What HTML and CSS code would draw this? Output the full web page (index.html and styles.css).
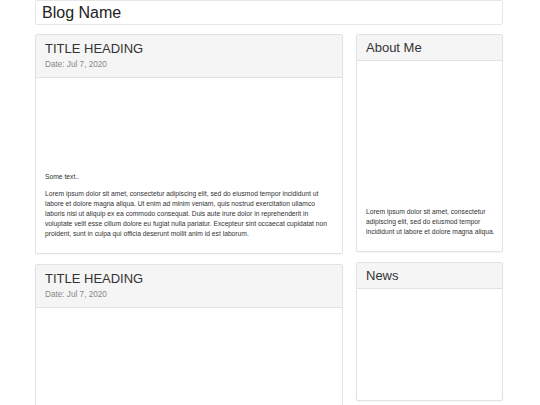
FILE: index.html
```html
<!DOCTYPE html>
<html>
<head>
<meta charset="utf-8">
<link rel="stylesheet" href="styles.css">
</head>
<body>
<div class="page">
  <div class="topbar">Blog Name</div>
  <div class="row">
    <div class="main">
      <div class="card">
        <div class="card-head">
          <div class="title">TITLE HEADING</div>
          <div class="date">Date: Jul 7, 2020</div>
        </div>
        <div class="card-body">
          <div class="spacer-main"></div>
          <p class="lead">Some text..</p>
          <p class="text">Lorem ipsum dolor sit amet, consectetur adipiscing elit, sed do eiusmod tempor incididunt ut labore et dolore magna aliqua. Ut enim ad minim veniam, quis nostrud exercitation ullamco laboris nisi ut aliquip ex ea commodo consequat. Duis aute irure dolor in reprehenderit in voluptate velit esse cillum dolore eu fugiat nulla pariatur. Excepteur sint occaecat cupidatat non proident, sunt in culpa qui officia deserunt mollit anim id est laborum.</p>
        </div>
      </div>
      <div class="card">
        <div class="card-head">
          <div class="title">TITLE HEADING</div>
          <div class="date">Date: Jul 7, 2020</div>
        </div>
        <div class="card-body">
          <div class="spacer-main2"></div>
        </div>
      </div>
    </div>
    <div class="side">
      <div class="card">
        <div class="side-head">About Me</div>
        <div class="card-body side-body">
          <div class="spacer-side"></div>
          <p class="text">Lorem ipsum dolor sit amet, consectetur adipiscing elit, sed do eiusmod tempor incididunt ut labore et dolore magna aliqua.</p>
        </div>
      </div>
      <div class="card news">
        <div class="side-head">News</div>
        <div class="card-body news-body"></div>
      </div>
    </div>
  </div>
</div>
</body>
</html>
```

FILE: styles.css
```css
html, body {
  margin: 0;
  padding: 0;
  background: #fff;
}
body {
  font-family: "Liberation Sans", Arial, sans-serif;
  color: #333;
}
.page {
  width: 468px;
  margin-left: 35px;
}
.topbar {
  height: 23px;
  line-height: 23px;
  border: 1px solid #e6e6e6;
  border-radius: 2px;
  padding-left: 6px;
  font-size: 16px;
  color: #222;
}
.row {
  display: flex;
  align-items: flex-start;
  gap: 13px;
  margin-top: 9px;
}
.main {
  width: 308px;
  flex: none;
}
.side {
  width: 147px;
  flex: none;
}
.card {
  border: 1px solid #e2e2e2;
  border-radius: 2px;
  background: #fff;
  box-shadow: 0 1px 1px rgba(0, 0, 0, 0.04);
  margin-bottom: 10px;
}
.card-head {
  background: #f5f5f5;
  border-bottom: 1px solid #e2e2e2;
  padding: 6px 9px 6px 9px;
}
.title {
  font-size: 13px;
  line-height: 16px;
  color: #333;
}
.date {
  font-size: 8.2px;
  line-height: 12px;
  margin-top: 2px;
  color: #888;
}
.side-head {
  background: #f5f5f5;
  border-bottom: 1px solid #e2e2e2;
  padding: 5px 9px 4px 9px;
  font-size: 13px;
  line-height: 16px;
  color: #333;
}
.card-body {
  padding: 9px 9px 9px 9px;
}
.side-body {
  padding-right: 3px;
}
.spacer-main {
  height: 85px;
}
.spacer-main2 {
  height: 200px;
}
.spacer-side {
  height: 137px;
}
.lead {
  margin: 0 0 7px 0;
  font-size: 6.72px;
  line-height: 10px;
  color: #333;
}
.text {
  margin: 0 0 5px 0;
  font-size: 6.72px;
  line-height: 10px;
  color: #333;
}
.news {
  margin-top: 1px;
}
.news-body {
  height: 93px;
}
```
